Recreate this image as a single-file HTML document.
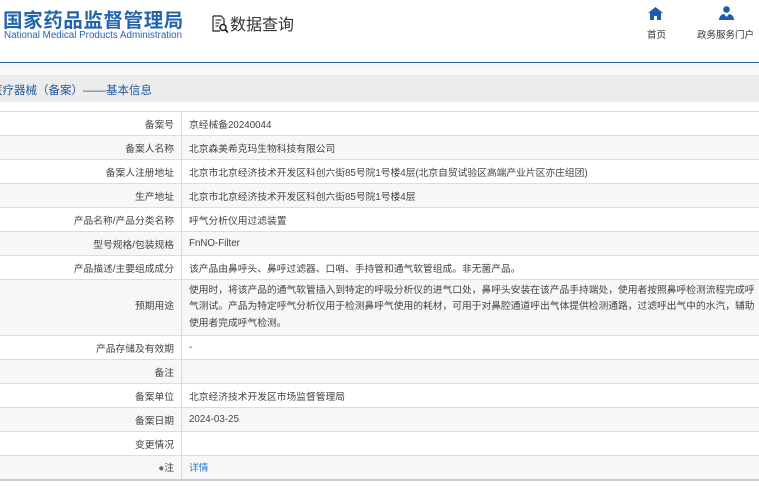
<!DOCTYPE html>
<html><head><meta charset="utf-8"><style>
*{margin:0;padding:0;box-sizing:border-box}
body{width:759px;height:486px;overflow:hidden;background:#fff;font-family:"Liberation Sans","Noto Sans CJK SC",sans-serif;position:relative;color:#333}
.a{position:absolute;white-space:nowrap}
.logo{left:3px;top:4px;font-size:19.5px;font-weight:bold;color:#2464ad;letter-spacing:0.6px}
.en{left:4px;top:30px;font-size:9.8px;color:#2464ad}
.q{left:210px;top:11px;font-size:16px;color:#333}
.nav{font-size:9.5px;color:#333}
.line{left:0;top:62px;width:759px;height:1px;background:#2a64a8}
.grad{left:0;top:63px;width:759px;height:12px;background:linear-gradient(#f4f4f4,#fafafa)}
.bar{left:0;top:75px;width:759px;height:27px;background:#ececec}
.title{left:-9px;top:82px;font-size:11.5px;color:#1f5a98}
table{position:absolute;left:-2px;top:111px;width:780px;border-collapse:collapse;font-size:9.75px;color:#444}
td{border:1px solid #ddd;height:24px;padding:0 7px;vertical-align:middle}
td.l{width:183px;text-align:right;padding-right:7px;color:#444}
tr:nth-child(even) td{background:#f7f7f7}
tr.m td{height:56px;line-height:16.5px}
table{border-bottom:2px solid #ccc}
</style></head><body>
<div class="a logo">国家药品监督管理局</div>
<div class="a en">National Medical Products Administration</div>
<div class="a q"><svg width="20" height="20" viewBox="0 0 20 20" style="vertical-align:-4px"><path d="M3 2h8l3 3v5M3 2v15h7" fill="none" stroke="#444" stroke-width="1.4"/><path d="M5.5 6h6M5.5 9h4M5.5 12h3" stroke="#444" stroke-width="1.2"/><circle cx="13" cy="13.5" r="3" fill="none" stroke="#222" stroke-width="1.5"/><path d="M15 15.5l3 3" stroke="#222" stroke-width="1.8"/></svg>数据查询</div>
<svg class="a" style="left:648px;top:7px" width="15" height="13" viewBox="0 0 15 13"><path d="M7.5 0L0 6h2v7h4V9h3v4h4V6h2z" fill="#1d5db0"/></svg>
<div class="a nav" style="left:647px;top:27px">首页</div>
<svg class="a" style="left:719px;top:6px" width="15" height="14" viewBox="0 0 15 14"><circle cx="7.5" cy="3.5" r="3.3" fill="#1d5db0"/><path d="M0 14c0-4 3-6 5-6l2.5 3L10 8c2 0 5 2 5 6z" fill="#1d5db0"/></svg>
<div class="a nav" style="left:697px;top:27px">政务服务门户</div>
<div class="a line"></div><div class="a grad"></div><div class="a bar"></div>
<div class="a title">医疗器械（备案）——基本信息</div>
<table>
<tr><td class="l">备案号</td><td>京经械备20240044</td></tr>
<tr><td class="l">备案人名称</td><td>北京森美希克玛生物科技有限公司</td></tr>
<tr><td class="l">备案人注册地址</td><td>北京市北京经济技术开发区科创六街85号院1号楼4层(北京自贸试验区高端产业片区亦庄组团)</td></tr>
<tr><td class="l">生产地址</td><td>北京市北京经济技术开发区科创六街85号院1号楼4层</td></tr>
<tr><td class="l">产品名称/产品分类名称</td><td>呼气分析仪用过滤装置</td></tr>
<tr><td class="l">型号规格/包装规格</td><td>FnNO-Filter</td></tr>
<tr><td class="l">产品描述/主要组成成分</td><td>该产品由鼻呼头、鼻呼过滤器、口哨、手持管和通气软管组成。非无菌产品。</td></tr>
<tr class="m"><td class="l">预期用途</td><td>使用时，将该产品的通气软管插入到特定的呼吸分析仪的进气口处，鼻呼头安装在该产品手持端处，使用者按照鼻呼检测流程完成呼<br>气测试。产品为特定呼气分析仪用于检测鼻呼气使用的耗材，可用于对鼻腔通道呼出气体提供检测通路，过滤呼出气中的水汽，辅助<br>使用者完成呼气检测。</td></tr>
<tr><td class="l">产品存储及有效期</td><td>-</td></tr>
<tr><td class="l">备注</td><td></td></tr>
<tr><td class="l">备案单位</td><td>北京经济技术开发区市场监督管理局</td></tr>
<tr><td class="l">备案日期</td><td>2024-03-25</td></tr>
<tr><td class="l">变更情况</td><td></td></tr>
<tr><td class="l"><span style="color:#666">●</span>注</td><td style="color:#2a7ad0">详情</td></tr>
</table>
</body></html>
